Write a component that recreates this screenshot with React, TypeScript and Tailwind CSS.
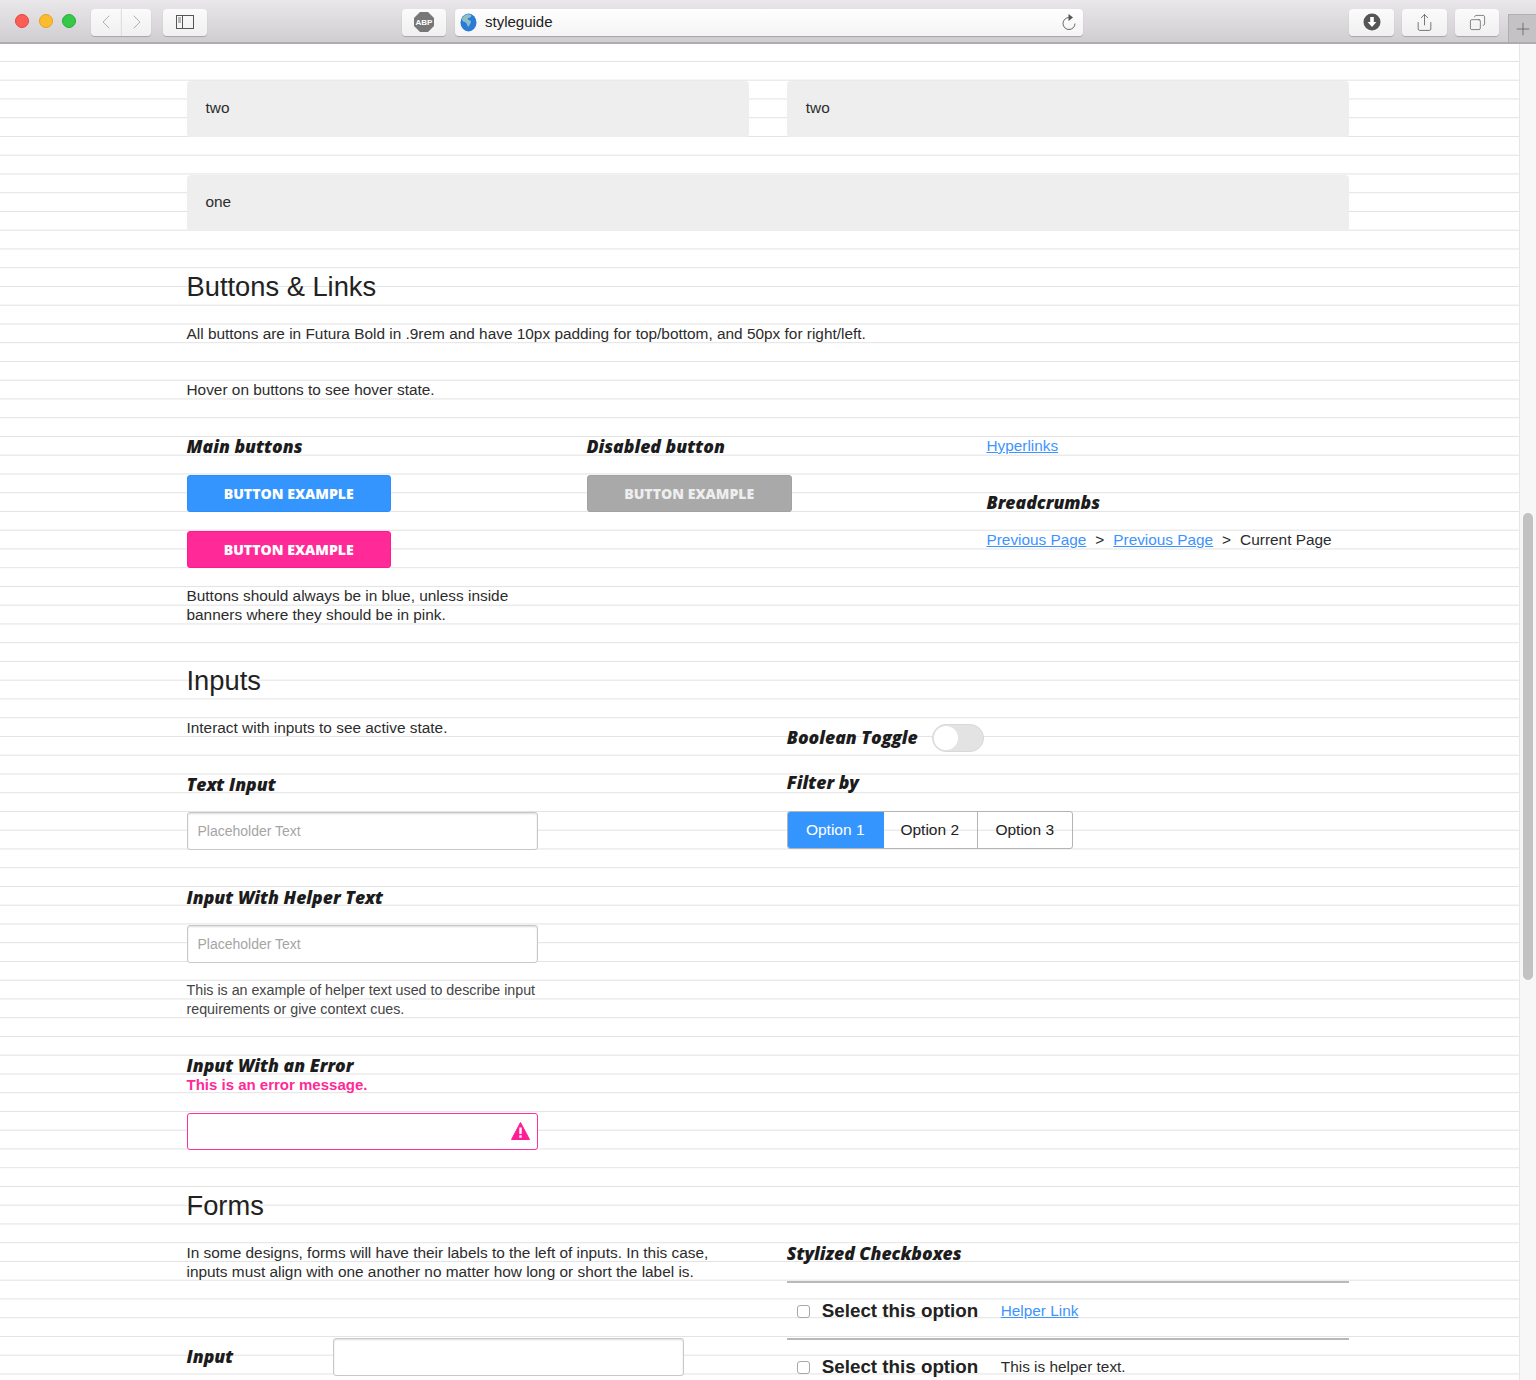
import React from 'react';
import { ChevronLeft, ChevronRight, Plus, Share, Copy } from 'lucide-react';

const label = "h-[18.75px] font-['Open_Sans'] text-[17.6px] leading-[18px] font-extrabold italic text-[#1c1c1c] whitespace-nowrap";
const heading = "h-[37.5px] text-[27.3px] leading-[37.5px] text-[#222]";
const copy = "text-[15.4px] leading-[18.75px] text-[#2c2c2c]";
const link = "text-[15.35px] leading-[18.75px] text-[#3d93ff] underline";
const field = "block h-[38px] w-[351px] rounded-[3px] border border-[#c8c8c8] bg-white px-[10px] text-[14px] shadow-[inset_0_1px_2px_rgba(0,0,0,0.14)] placeholder:text-[#a5a5a5] outline-none";
const toolBtn = "mt-[2px] flex h-[27px] items-center justify-center rounded-[4px] bg-gradient-to-b from-[#fbfbfb] to-[#f0f0f0] shadow-[0_1px_1px_rgba(0,0,0,0.22)]";
const mainBtn = "block h-[37px] w-[204.5px] rounded-[3px] border font-['Open_Sans'] text-[14.1px] font-extrabold";

function Toolbar() {
  return (
    <header className="flex h-[44px] items-center border-b-2 border-[#aeacae] bg-gradient-to-b from-[#e9e7e9] to-[#d0ced0] pl-[15px]">
      <span className="h-[14px] w-[14px] rounded-full border border-[#e2463f] bg-[#fc5d57]" />
      <span className="ml-[10px] h-[14px] w-[14px] rounded-full border border-[#e0a325] bg-[#fdbc2e]" />
      <span className="ml-[9px] h-[14px] w-[14px] rounded-full border border-[#2aac3b] bg-[#35c849]" />
      <div className={`${toolBtn} ml-[15px] w-[30px] rounded-r-none`}>
        <ChevronLeft className="h-[24px] w-[24px] text-[#b0b0b0]" strokeWidth={1} />
      </div>
      <div className={`${toolBtn} w-[30px] rounded-l-none border-l border-[#e0e0e0]`}>
        <ChevronRight className="h-[24px] w-[24px] text-[#b0b0b0]" strokeWidth={1} />
      </div>
      <div className={`${toolBtn} ml-[12px] w-[44px]`}>
        <svg width="18" height="14" viewBox="0 0 18 14" fill="none" stroke="#555" strokeWidth="1">
          <rect x="0.5" y="0.5" width="17" height="13" />
          <line x1="6.5" y1="0.5" x2="6.5" y2="13.5" />
          <path d="M2 3h3M2 5h3M2 7h3" stroke="#777" />
        </svg>
      </div>
      <div className={`${toolBtn} ml-[195px] w-[44px]`}>
        <svg width="20" height="20" viewBox="0 0 20 20">
          <polygon points="6,0 14,0 20,6 20,14 14,20 6,20 0,14 0,6" fill="#777" />
          <text x="10" y="13" textAnchor="middle" fontSize="8" fontWeight="700" fill="#fff" fontFamily="Liberation Sans">ABP</text>
        </svg>
      </div>
      <div className={`${toolBtn} ml-[9px] w-[628px] justify-start bg-gradient-to-b from-white to-[#f4f4f4] px-[5px]`}>
        <svg width="17" height="19" viewBox="0 0 17 19">
          <ellipse cx="8.5" cy="9.5" rx="8" ry="9" fill="#2a7bd6" />
          <path d="M4 3c2-2 5-2 7-1 1 2-1 3-3 3-1 2 2 2 3 3 0 2-2 5-3 6-1-2-1-4-3-5-2 0-3-2-3-3 0-1 1-2 2-3z" fill="#8fc0c8" />
        </svg>
        <span className="ml-[8px] text-[15px] text-[#222]">styleguide</span>
        <svg className="ml-auto mr-[2px]" width="14" height="17" viewBox="0 0 14 17" fill="none">
          <path d="M7 3.5a6 6 0 1 0 6 6" stroke="#666" strokeWidth="1" />
          <path d="M6.5 0 11 3.5 6.5 7z" fill="#555" />
        </svg>
      </div>
      <div className={`${toolBtn} ml-[266px] w-[45px]`}>
        <svg width="18" height="18" viewBox="0 0 18 18">
          <circle cx="9" cy="9" r="8.5" fill="#555" />
          <path d="M7.2 4h3.6v5h2.6L9 14 4.6 9h2.6z" fill="#fff" />
        </svg>
      </div>
      <div className={`${toolBtn} ml-[8px] w-[45px]`}>
        <Share className="h-[19px] w-[19px] text-[#555]" strokeWidth={1} />
      </div>
      <div className={`${toolBtn} ml-[8px] w-[44px]`}>
        <Copy className="h-[17px] w-[17px] -scale-x-100 text-[#555]" strokeWidth={1} />
      </div>
      <div className="ml-[9px] flex h-[28px] w-[28px] items-center justify-center self-end border-l border-t border-[#b0aeb0] bg-[#c4c2c4]">
        <Plus className="h-[20px] w-[20px] text-[#666]" strokeWidth={1} />
      </div>
    </header>
  );
}

function Scrollbar() {
  return (
    <aside className="w-[17px] shrink-0 border-l border-[#e6e6e6] bg-[#f7f7f7] pl-[3px] pt-[469px]">
      <div className="h-[467px] w-[10px] rounded-[5px] bg-[#c2c2c2]" />
    </aside>
  );
}

export default function App() {
  return (
    <div className="h-[1380px] w-[1536px] overflow-hidden bg-white font-['Liberation_Sans',sans-serif]">
      <Toolbar />
      <div className="flex h-[1336px]">
        <main className="w-[1519px] bg-[linear-gradient(#e2e2e2_1px,transparent_1px)] bg-[size:100%_18.75px] bg-[position:0_-1.8px] pl-[186.5px] pt-[37px]">
          <div className="w-[1162.5px]">
            {/* Grid samples */}
            <div className="grid grid-cols-2 gap-[38px]">
              <div className={`${copy} flex h-[56px] items-center rounded-[4px] bg-[#eeeeee] pb-[1px] pl-[19px]`}>two</div>
              <div className={`${copy} flex h-[56px] items-center rounded-[4px] bg-[#eeeeee] pb-[1px] pl-[19px]`}>two</div>
            </div>
            <div className={`${copy} mt-[38px] flex h-[56px] items-center rounded-[4px] bg-[#eeeeee] pb-[1px] pl-[19px]`}>one</div>

            {/* Buttons & Links */}
            <h2 className={`${heading} mt-[37px]`}>Buttons &amp; Links</h2>
            <p className={`${copy} mt-[19px]`}>All buttons are in Futura Bold in .9rem and have 10px padding for top/bottom, and 50px for right/left.</p>
            <p className={`${copy} mt-[37.5px]`}>Hover on buttons to see hover state.</p>

            <div className="mt-[37.5px] grid grid-cols-[400px_400px_1fr]">
              <div>
                <div className={label}>Main buttons</div>
                <button className={`${mainBtn} mt-[19px] border-[#2a8eff] bg-[#3595ff] text-white`}>BUTTON EXAMPLE</button>
                <button className={`${mainBtn} mt-[19px] border-[#ff1a90] bg-[#ff2a97] text-white`}>BUTTON EXAMPLE</button>
                <p className={`${copy} mt-[19px]`}>Buttons should always be in blue, unless inside<br />banners where they should be in pink.</p>
              </div>
              <div>
                <div className={label}>Disabled button</div>
                <button className={`${mainBtn} mt-[19px] w-[205.5px] border-[#a2a2a2] bg-[#a9a9a9] text-[#eeeeee]`}>BUTTON EXAMPLE</button>
              </div>
              <div>
                <a className={`${link} block`}>Hyperlinks</a>
                <div className={`${label} mt-[37.5px]`}>Breadcrumbs</div>
                <div className={`${copy} mt-[19px] flex gap-[9px]`}>
                  <a className={link}>Previous Page</a>
                  <span>&gt;</span>
                  <a className={link}>Previous Page</a>
                  <span>&gt;</span>
                  <span>Current Page</span>
                </div>
              </div>
            </div>

            {/* Inputs */}
            <h2 className={`${heading} mt-[37.75px]`}>Inputs</h2>
            <div className="mt-[19px] grid grid-cols-2 gap-[38px]">
              <div>
                <p className={copy}>Interact with inputs to see active state.</p>
                <div className={`${label} mt-[37.5px]`}>Text Input</div>
                <input className={`${field} mt-[18px]`} placeholder="Placeholder Text" />
                <div className={`${label} mt-[38.5px]`}>Input With Helper Text</div>
                <input className={`${field} mt-[18px]`} placeholder="Placeholder Text" />
                <p className="mt-[18px] text-[14.25px] leading-[18.75px] text-[#444]">This is an example of helper text used to describe input<br />requirements or give context cues.</p>
                <div className={`${label} mt-[37.5px]`}>Input With an Error</div>
                <div className="h-[19.75px] pt-[1px] text-[15px] leading-[18.75px] font-bold text-[#ff2a97]">This is an error message.</div>
                <div className="relative mt-[19px] h-[37px] w-[351px] rounded-[3px] border border-[#ff2f9b] bg-white">
                  <input className="block h-full w-full bg-transparent outline-none" />
                  <svg className="absolute right-[7px] top-[8px]" width="19" height="18" viewBox="0 0 19 18">
                    <path d="M9.5 0.5 18.5 17.5H0.5Z" fill="#ff1f93" stroke="#ff1f93" strokeLinejoin="round" />
                    <rect x="8.3" y="5.5" width="2.4" height="6.5" fill="#fff" />
                    <rect x="8.3" y="13.3" width="2.4" height="2.4" fill="#fff" />
                  </svg>
                </div>
              </div>
              <div>
                <div className="mt-[5px] flex h-[28px] items-center gap-[14px]">
                  <div className={label}>Boolean Toggle</div>
                  <div className="h-[28px] w-[52px] rounded-full border border-[#d8d8d8] bg-[#e3e3e3] p-px">
                    <div className="h-[24px] w-[24px] rounded-full bg-white" />
                  </div>
                </div>
                <div className={`${label} mt-[21.5px]`}>Filter by</div>
                <div className="mt-[19px] flex h-[38px] w-[286px] overflow-hidden rounded-[3px] border border-[#b4b4b4] text-[15.5px] text-[#222]">
                  <div className="-m-px flex w-[97px] items-center justify-center bg-[#3595ff] text-white">Option 1</div>
                  <div className="flex w-[95px] items-center justify-center border-r border-[#b4b4b4]">Option 2</div>
                  <div className="flex flex-1 items-center justify-center">Option 3</div>
                </div>
              </div>
            </div>

            {/* Forms */}
            <h2 className={`${heading} mt-[37px]`}>Forms</h2>
            <div className="mt-[19.5px] grid grid-cols-2 gap-[38px]">
              <div>
                <p className={copy}>In some designs, forms will have their labels to the left of inputs. In this case,<br />inputs must align with one another no matter how long or short the label is.</p>
                <div className="mt-[56px] flex items-center">
                  <div className={`${label} w-[146.5px]`}>Input</div>
                  <input className={`${field} h-[37px] w-[351.5px]`} />
                </div>
              </div>
              <div>
                <div className={label}>Stylized Checkboxes</div>
                <div className="mt-[17.5px] flex h-[57px] items-center border-t-2 border-[#b9b9b9] pl-[10px] pt-[3px]">
                  <span className="h-[13px] w-[13px] rounded-[3px] border border-[#a8a8a8] bg-white" />
                  <span className="ml-[12px] w-[179px] text-[18.8px] font-bold text-[#222]">Select this option</span>
                  <a className={link}>Helper Link</a>
                </div>
                <div className="flex h-[57px] items-center border-t-2 border-[#b9b9b9] pl-[10px] pt-[1px]">
                  <span className="h-[13px] w-[13px] rounded-[3px] border border-[#a8a8a8] bg-white" />
                  <span className="ml-[12px] w-[179px] text-[18.8px] font-bold text-[#222]">Select this option</span>
                  <span className={copy}>This is helper text.</span>
                </div>
              </div>
            </div>
          </div>
        </main>
        <Scrollbar />
      </div>
    </div>
  );
}
